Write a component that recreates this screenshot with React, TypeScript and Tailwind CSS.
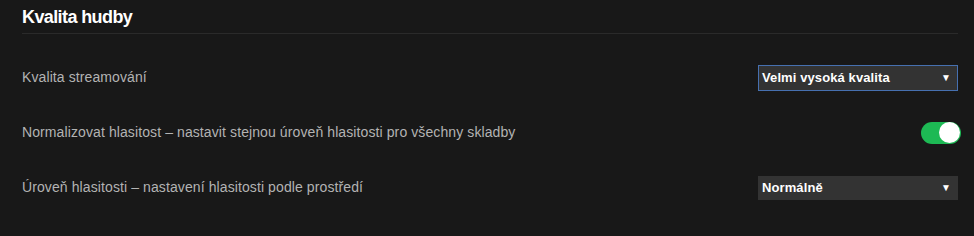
import React, { useState } from 'react';

const font = { fontFamily: '"Liberation Sans", Arial, sans-serif' };

const Dropdown: React.FC<{ value: string; focused?: boolean }> = ({ value, focused }) => (
  <div
    className={
      focused
        ? 'flex h-[26px] w-[200px] items-center justify-between border border-[#4670b0] bg-[#333333] pl-[3px] pr-[6px]'
        : 'flex h-[24px] w-[200px] items-center justify-between bg-[#333333] pl-[4px] pr-[7px]'
    }
  >
    <span className="text-[13px] font-bold text-white">{value}</span>
    <span className="text-[10px] leading-none text-white">▼</span>
  </div>
);

const Toggle: React.FC = () => {
  const [on, setOn] = useState(true);
  return (
    <button
      onClick={() => setOn(!on)}
      className={`flex h-[22px] w-[40px] items-center rounded-full p-[1px] ${on ? 'justify-end bg-[#1db954]' : 'justify-start bg-[#535353]'}`}
    >
      <span className="h-[21px] w-[21px] rounded-full bg-white" />
    </button>
  );
};

export default function App() {
  return (
    <div className="min-h-screen bg-[#181818] pl-[22px] pr-[16px]" style={font}>
      {/* Header */}
      <div className="border-b border-[#2a2a2a] pt-[5px] pb-[4px]">
        <h2 className="text-[18px] font-bold leading-[24px] tracking-[-0.6px] text-white">Kvalita hudby</h2>
      </div>

      <div className="mt-[16px] text-[14px] tracking-[0.1px] text-[#b3b3b3]">
        <div className="flex h-[55px] items-center justify-between">
          <span>Kvalita streamování</span>
          <Dropdown value="Velmi vysoká kvalita" focused />
        </div>
        <div className="flex h-[55px] items-center justify-between">
          <span>Normalizovat hlasitost – nastavit stejnou úroveň hlasitosti pro všechny skladby</span>
          <div className="mr-[-3px]">
            <Toggle />
          </div>
        </div>
        <div className="flex h-[55px] items-center justify-between">
          <span>Úroveň hlasitosti – nastavení hlasitosti podle prostředí</span>
          <Dropdown value="Normálně" />
        </div>
      </div>
    </div>
  );
}
